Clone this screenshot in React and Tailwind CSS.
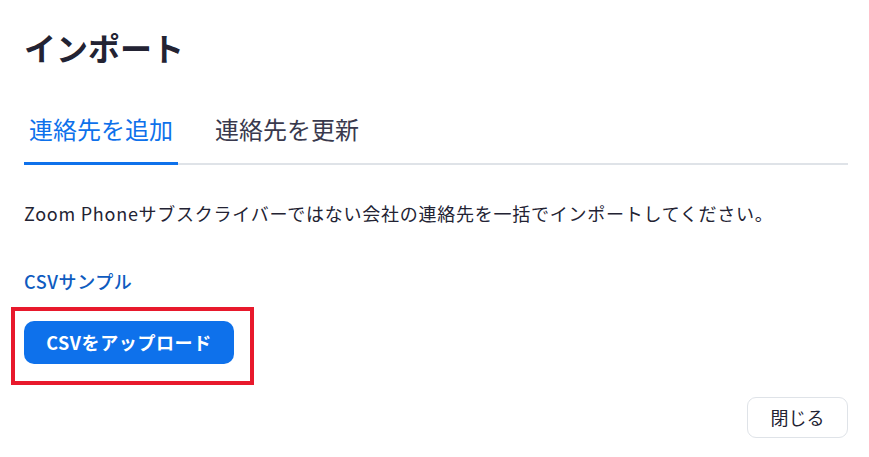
import React, { useState } from "react";

const font = { fontFamily: '"Noto Sans CJK JP", "Noto Sans", sans-serif' };

/* tab button */
function Tab({ label, active, onClick }) {
  return (
    <button type="button" onClick={onClick}
      className={`px-[5px] pb-[21px] -mb-[2px] border-b-[3px] text-[24px] leading-[24px] ${
        active ? "border-[#0e71eb] text-[#0e71eb]" : "border-transparent text-[#39394d]"
      }`}>
      {label}
    </button>
  );
}

export default function App() {
  const [tab, setTab] = useState(0);

  return (
    <div className="w-[869px] h-[457px] bg-white overflow-hidden" style={font}>
      <div className="flex flex-col pl-[24px] pr-[21px]">
        <h1 className="mt-[31px] text-[32px] leading-[32px] font-bold text-[#232333]">インポート</h1>

        <div className="mt-[54px] flex gap-[32px] border-b-2 border-[#dfe3e8]">
          <Tab label="連絡先を追加" active={tab === 0} onClick={() => setTab(0)} />
          <Tab label="連絡先を更新" active={tab === 1} onClick={() => setTab(1)} />
        </div>

        <p className="mt-[39px] text-[18px] leading-[18px] text-[#232333] tracking-[0.75px]">
          Zoom Phoneサブスクライバーではない会社の連絡先を一括でインポートしてください。
        </p>

        <a href="#" className="mt-[50px] self-start text-[18px] leading-[18px] font-medium tracking-[0.6px] text-[#0e5bbf]">
          CSVサンプル
        </a>

        <div className="mt-[17px] -ml-[13px] self-start border-4 border-[#e8192c] pl-[9px] pt-[10px] pr-[16px] pb-[17px]">
          <button type="button"
            className="w-[210px] h-[43px] rounded-[10px] bg-[#0e71eb] text-white text-[18px] font-bold tracking-[0.6px]">
            CSVをアップロード
          </button>
        </div>

        <div className="mt-[12px] flex justify-end">
          <button type="button"
            className="w-[101px] h-[41px] rounded-[9px] border border-[#dfe3e8] bg-white text-[18px] text-[#232333]">
            閉じる
          </button>
        </div>
      </div>
    </div>
  );
}
